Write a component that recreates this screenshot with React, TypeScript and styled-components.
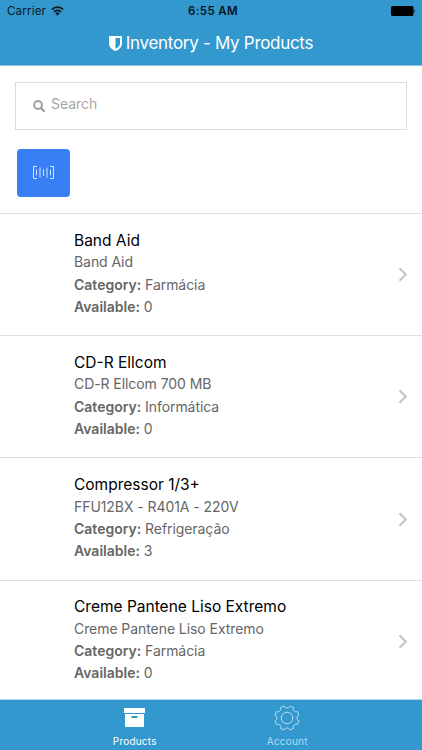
import React from "react";
import styled, { createGlobalStyle } from "styled-components";

const Global = createGlobalStyle`
  * { box-sizing: border-box; }
  html, body { margin: 0; background: #fff; }
  body { font-family: Inter, "Liberation Sans", sans-serif; overflow: hidden; }
`;

const Screen = styled.div`
  width: 422px;
  height: 750px;
  display: flex;
  flex-direction: column;
  overflow: hidden;
  background: #fff;
`;

const Header = styled.header`
  height: 66px;
  flex: none;
  background: #3398ce;
  border-bottom: 1px solid #8fc5e3;
`;

const StatusBar = styled.div`
  height: 22px;
  padding: 0 6px 0 7px;
  display: grid;
  grid-template-columns: 1fr auto 1fr;
  align-items: center;
  font-size: 12px;
  line-height: 22px;
  color: #07151d;
`;

const Carrier = styled.div`
  display: flex;
  align-items: center;
  gap: 5px;
  font-size: 11.5px;
  letter-spacing: 0.2px;
`;

const Clock = styled.div`
  font-weight: 600;
  font-size: 11.5px;
  letter-spacing: 0.35px;
  padding-left: 3px;
`;

const Battery = styled.div`
  display: flex;
  justify-content: flex-end;
`;

const TitleBar = styled.div`
  height: 43px;
  padding-bottom: 1px;
  display: flex;
  align-items: center;
  justify-content: center;
  gap: 4px;
  color: #fff;
`;

const Title = styled.h1`
  margin: 0;
  font-size: 17px;
  line-height: 24px;
  font-weight: 400;
  letter-spacing: -0.3px;
  white-space: nowrap;
`;

const Tools = styled.section`
  flex: none;
  height: 147px;
  padding: 16px 15px 0;
`;

const SearchField = styled.label`
  height: 48px;
  border: 1px solid #dcdcdc;
  padding: 0 17px;
  display: flex;
  align-items: center;
  gap: 6px;
  color: #a5a5a5;
`;

const Placeholder = styled.span`
  font-size: 14px;
  line-height: 20px;
  letter-spacing: -0.05px;
  padding-bottom: 4px;
`;

const ScanButton = styled.button`
  display: flex;
  align-items: center;
  justify-content: center;
  width: 53px;
  height: 48px;
  margin: 19px 0 0 2px;
  padding: 0 0 2px;
  border: 0;
  border-radius: 4px;
  background: #387ef5;
`;

const List = styled.ul`
  flex: 1;
  min-height: 0;
  margin: 0;
  padding: 0;
  list-style: none;
  overflow: hidden;
`;

const Item = styled.li`
  height: 122.2px;
  border-top: 1px solid #dedede;
  padding: 15.65px 14.5px 0 74px;
  display: flex;
  justify-content: space-between;
`;

const Name = styled.h2`
  margin: 0 0 -0.75px;
  font-size: 15.5px;
  line-height: 22.4px;
  font-weight: 400;
  color: #000;
`;

const Line = styled.p`
  margin: 0;
  font-size: 14px;
  line-height: 22.3px;
  letter-spacing: -0.07px;
  color: #666;
`;

const Label = styled.strong`
  font-weight: 600;
  letter-spacing: 0;
`;

const Chevron = styled.svg`
  margin-top: 37.5px;
`;

const Tabs = styled.nav`
  height: 51px;
  flex: none;
  display: flex;
  justify-content: center;
  background: #3398ce;
  border-top: 1px solid #b5dcee;
`;

const Tab = styled.div<{ $active?: boolean }>`
  width: 152.5px;
  display: flex;
  flex-direction: column;
  align-items: center;
  color: ${(p) => (p.$active ? "#fff" : "#b3dcf3")};
`;

const TabIcon = styled.div`
  height: 35px;
  display: flex;
  align-items: center;
`;

const TabLabel = styled.span`
  font-size: 10px;
  line-height: 13px;
  letter-spacing: 0.2px;
`;

const products = [
  { name: "Band Aid", detail: "Band Aid", category: "Farmácia", available: 0 },
  { name: "CD-R Ellcom", detail: "CD-R Ellcom 700 MB", category: "Informática", available: 0 },
  { name: "Compressor 1/3+", detail: "FFU12BX - R401A - 220V", category: "Refrigeração", available: 3 },
  { name: "Creme Pantene Liso Extremo", detail: "Creme Pantene Liso Extremo", category: "Farmácia", available: 0 },
];

// Eight flat teeth separated by round notches.
const gearPath = (() => {
  const point = (deg: number) => {
    const a = (deg * Math.PI) / 180;
    return `${(13 + 12.3 * Math.cos(a)).toFixed(2)} ${(13 + 12.3 * Math.sin(a)).toFixed(2)}`;
  };
  let d = "";
  for (let k = 0; k < 8; k++) {
    d += `${k ? "L" : "M"}${point(k * 45 - 13.5)}A3.05 3.05 0 0 0 ${point(k * 45 + 13.5)}`;
  }
  return d + "Z";
})();

export default function App() {
  return (
    <Screen>
      <Global />
      <Header>
        <StatusBar>
          <Carrier>
            <span>Carrier</span>
            <svg width="13" height="10" viewBox="0 0 13 10" fill="none" stroke="#07151d" strokeWidth="1.7">
              <path d="M0.8 3.5a8.1 8.1 0 0 1 11.4 0M2.9 5.8a5.1 5.1 0 0 1 7.2 0" />
              <path d="M6.5 9.5L4.4 7.4a3 3 0 0 1 4.2 0Z" fill="#07151d" stroke="none" />
            </svg>
          </Carrier>
          <Clock>6:55 AM</Clock>
          <Battery>
            <svg width="25" height="10" viewBox="0 0 25 10">
              <rect width="22.5" height="10" rx="1.5" fill="#000" />
              <path d="M23.2 3.3q1.6 1.7 0 3.4z" fill="#000" />
            </svg>
          </Battery>
        </StatusBar>
        <TitleBar>
          <svg width="13" height="15" viewBox="0 0 13 15">
            <path
              fill="#fff"
              fillRule="evenodd"
              d="M0 0.8Q0 0 0.8 0H12.2Q13 0 13 0.8V7.5C13 11 10 13.5 6.5 15C3 13.5 0 11 0 7.5ZM6.5 2V12.8C9 11.5 11 9.7 11 7.4V2Z"
            />
          </svg>
          <Title>Inventory - My Products</Title>
        </TitleBar>
      </Header>
      <Tools>
        <SearchField>
          <svg width="12" height="12" viewBox="0 0 12 12" fill="none" stroke="#a0a0a0">
            <circle cx="5" cy="5" r="3.9" strokeWidth="2" />
            <path d="M7.9 7.9L11 11" strokeWidth="2.3" strokeLinecap="round" />
          </svg>
          <Placeholder>Search</Placeholder>
        </SearchField>
        <ScanButton aria-label="Scan barcode">
          <svg width="21" height="13" viewBox="0 0 21 13" fill="none" stroke="#d5e6ff" strokeWidth="1">
            <path d="M4 0.5H0.5V12.5H4M17 0.5H20.5V12.5H17M3.5 3.5V9.5M7 1.5V11.5M10.5 3V10M14 1.5V11.5M17.5 3.5V9.5" />
          </svg>
        </ScanButton>
      </Tools>
      <List>
        {products.map((p) => (
          <Item key={p.name}>
            <div>
              <Name>{p.name}</Name>
              <Line>{p.detail}</Line>
              <Line><Label>Category:</Label> {p.category}</Line>
              <Line><Label>Available:</Label> {p.available}</Line>
            </div>
            <Chevron width="10" height="15" viewBox="0 0 10 15" fill="none" stroke="#c3c3c3" strokeWidth="2">
              <path d="M1.5 1.2L7.8 7.5L1.5 13.8" />
            </Chevron>
          </Item>
        ))}
      </List>
      <Tabs>
        <Tab $active>
          <TabIcon>
            <svg width="21" height="19" viewBox="0 0 21 19">
              <path fill="#fff" d="M0 0H21V5H0Z" />
              <path fill="#fff" fillRule="evenodd" d="M1 6H20V18.2Q20 19 19.2 19H1.8Q1 19 1 18.2ZM7.5 8V10H13.5V8Z" />
            </svg>
          </TabIcon>
          <TabLabel>Products</TabLabel>
        </Tab>
        <Tab>
          <TabIcon>
            <svg width="26" height="26" viewBox="0 0 26 26" fill="none" stroke="#b3dcf3" strokeWidth="1" strokeLinejoin="round">
              <path d={gearPath} />
              <circle cx="13" cy="13" r="5.8" />
            </svg>
          </TabIcon>
          <TabLabel>Account</TabLabel>
        </Tab>
      </Tabs>
    </Screen>
  );
}
